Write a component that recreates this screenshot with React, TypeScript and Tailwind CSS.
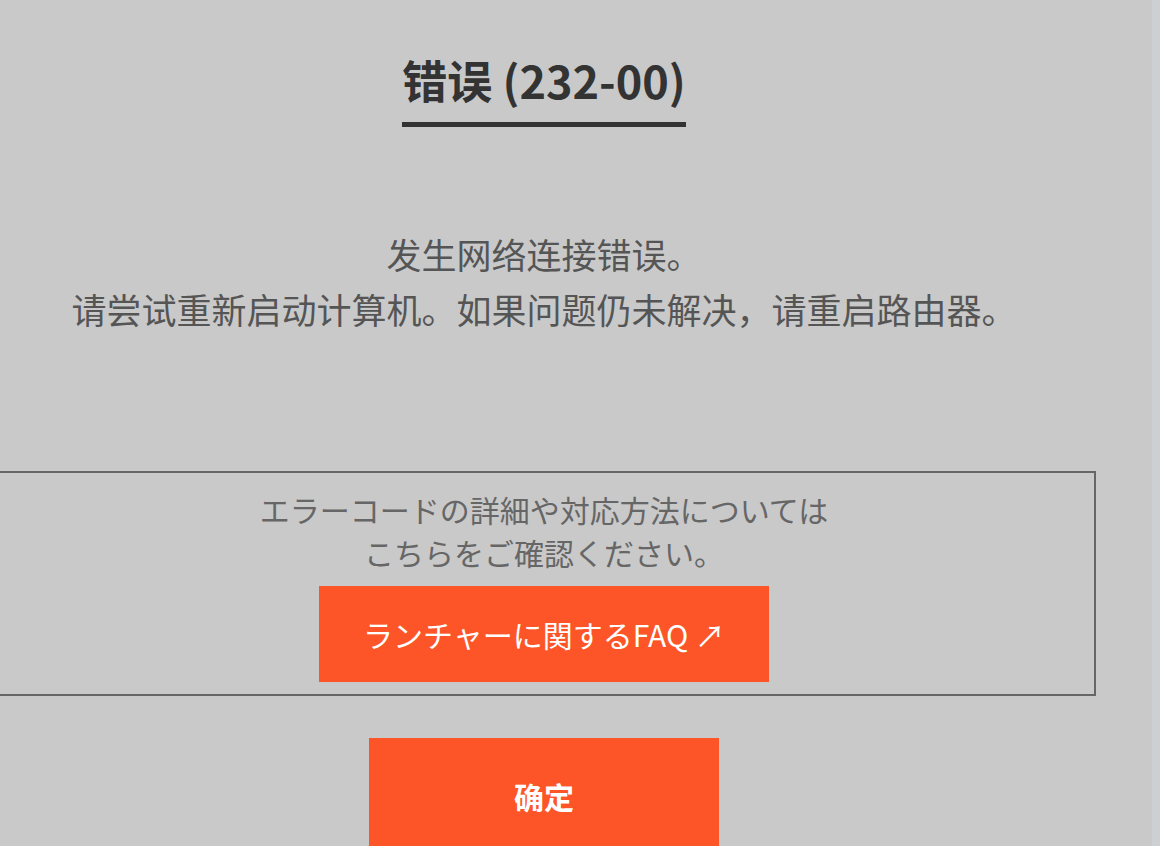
import React from "react";

export default function App() {
  return (
    <div className="relative flex h-[846px] w-[1160px] overflow-hidden bg-[#c9c9c9]">
      <div className="ml-[-8px] flex w-[1104px] flex-col items-center pt-[56px]">
        {/* Title */}
        <h1 className="border-b-[5px] border-[#333] pb-[18px] font-['Noto_Sans_CJK_SC',sans-serif] text-[45px] font-bold leading-[48px] text-[#333]">
          错误 (232-00)
        </h1>

        {/* Message */}
        <div className="mt-[99px] text-center font-['Noto_Sans_CJK_SC',sans-serif] text-[35px] leading-[55px] text-[#555]">
          <p>发生网络连接错误。</p>
          <p>请尝试重新启动计算机。如果问题仍未解决，请重启路由器。</p>
        </div>

        {/* FAQ box */}
        <div className="mt-[135px] flex w-full flex-col items-center border-2 border-[#666] pt-[15px] pb-[12px]">
          <div className="text-center font-['Noto_Sans_CJK_JP',sans-serif] text-[30px] leading-[43px] text-[#666]">
            <p>エラーコードの詳細や対応方法については</p>
            <p>こちらをご確認ください。</p>
          </div>
          <button className="mt-[12px] flex h-[96px] w-[450px] items-center justify-center bg-[#fd5528] font-['Noto_Sans_CJK_JP',sans-serif] text-[30px] text-white">
            ランチャーに関するFAQ ↗
          </button>
        </div>

        {/* OK */}
        <button className="mt-[42px] flex h-[116px] w-[350px] shrink-0 items-center justify-center bg-[#fd5528] font-['Noto_Sans_CJK_SC',sans-serif] text-[30px] font-bold text-white">
          确定
        </button>
      </div>
      <div className="absolute right-0 top-0 h-full w-[8px] bg-[#ccd0d2]" />
    </div>
  );
}
